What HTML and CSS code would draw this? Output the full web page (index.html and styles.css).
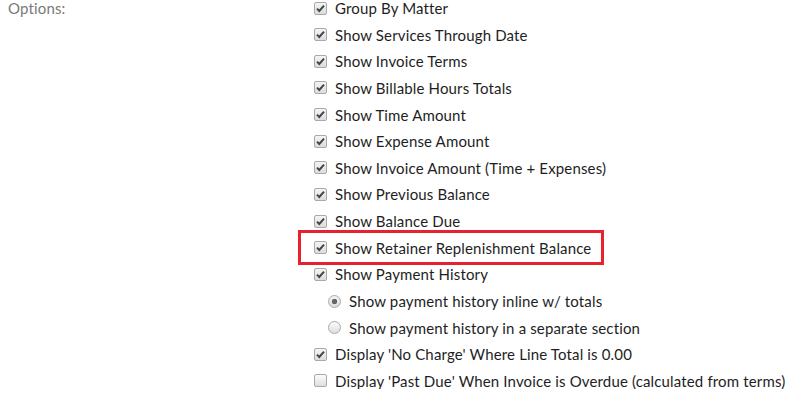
FILE: index.html
```html
<!DOCTYPE html>
<html lang="en">

<head>
    <meta charset="UTF-8">
    <meta name="viewport" content="width=device-width, initial-scale=1.0">
    <title>Invoice options</title>
    <link rel="stylesheet" href="styles.css">
</head>

<body>
    <main class="form-row">
        <div class="rotulo">Options:</div>
        <div class="opcoes">
            <label class="opcao"><input type="checkbox" checked> Group By Matter</label>
            <label class="opcao"><input type="checkbox" checked> Show Services Through Date</label>
            <label class="opcao"><input type="checkbox" checked> Show Invoice Terms</label>
            <label class="opcao"><input type="checkbox" checked> Show Billable Hours Totals</label>
            <label class="opcao"><input type="checkbox" checked> Show Time Amount</label>
            <label class="opcao"><input type="checkbox" checked> Show Expense Amount</label>
            <label class="opcao"><input type="checkbox" checked> Show Invoice Amount (Time + Expenses)</label>
            <label class="opcao"><input type="checkbox" checked> Show Previous Balance</label>
            <label class="opcao"><input type="checkbox" checked> Show Balance Due</label>
            <label class="opcao destaque"><input type="checkbox" checked> Show Retainer Replenishment Balance</label>
            <label class="opcao"><input type="checkbox" checked> Show Payment History</label>
            <label class="opcao sub"><input type="radio" name="historico" checked> Show payment history inline w/ totals</label>
            <label class="opcao sub"><input type="radio" name="historico"> Show payment history in a separate section</label>
            <label class="opcao"><input type="checkbox" checked> Display 'No Charge' Where Line Total is 0.00</label>
            <label class="opcao"><input type="checkbox"> Display 'Past Due' When Invoice is Overdue (calculated from terms)</label>
        </div>
    </main>
</body>

</html>
```

FILE: styles.css
```css
html,
body {
    margin: 0;
    font-family: Lato, 'Liberation Sans', sans-serif;
    font-size: 15px;
    letter-spacing: 0.15px;
    color: #1e1e24;
    background: #fff;
}

.form-row {
    display: grid;
    grid-template-columns: 314px auto;
}

.rotulo {
    padding-left: 8px;
    color: #7a7a7a;
    line-height: 16px;
}

.opcoes {
    display: flex;
    flex-direction: column;
    align-items: flex-start;
    gap: 10.65px;
}

.opcao {
    display: flex;
    align-items: center;
    gap: 8px;
    line-height: 16px;
    height: 16px;
    white-space: nowrap;
}

.opcao.sub {
    margin-left: 14px;
}

.destaque {
    padding: 6.5px 10px 6.5px 13px;
    margin: -9.5px 0 -9.5px -16px;
    border: 3px solid #e8212e;
}

input[type="checkbox"],
input[type="radio"] {
    appearance: none;
    margin: 0;
    width: 13px;
    height: 13px;
    flex: none;
    border: 1px solid #a9a9a9;
    background: linear-gradient(#fcfcfc, #dedede);
}

input[type="checkbox"] {
    border-radius: 2px;
}

input[type="checkbox"]:checked {
    background: url("data:image/svg+xml,%3Csvg xmlns='http://www.w3.org/2000/svg' viewBox='0 0 11 11'%3E%3Cpath d='M2 5.6 4.3 8 9 2.6' fill='none' stroke='%23444' stroke-width='2'/%3E%3C/svg%3E") center / 11px no-repeat, linear-gradient(#f4f4f4, #dcdcdc);
}

input[type="radio"] {
    border-radius: 50%;
}

input[type="radio"]:checked {
    background: radial-gradient(circle, #666 0 2.5px, transparent 3px), linear-gradient(#f4f4f4, #dcdcdc);
}
```
